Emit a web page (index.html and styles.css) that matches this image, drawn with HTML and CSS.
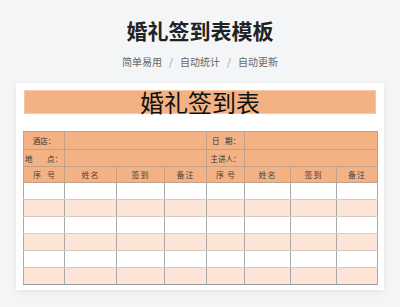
FILE: index.html
```html
<!DOCTYPE html>
<html lang="zh">
<head>
<meta charset="utf-8">
<link rel="stylesheet" href="styles.css">
</head>
<body>
<header class="head">
  <h1 class="title">婚礼签到表模板</h1>
  <div class="tags"><span>简单易用</span><span class="sep">/</span><span>自动统计</span><span class="sep">/</span><span>自动更新</span></div>
</header>
<main class="card">
  <div class="band">婚礼签到表</div>
  <table class="sheet">
    <colgroup>
      <col class="c1"><col class="c2"><col class="c3"><col class="c4">
      <col class="c5"><col class="c6"><col class="c7"><col class="c8">
    </colgroup>
    <tr class="info r1">
      <td class="lbl"><span class="ctr">酒店：</span></td>
      <td colspan="3"></td>
      <td class="lbl"><span class="spread"><span>日</span><span>期：</span></span></td>
      <td colspan="3"></td>
    </tr>
    <tr class="info r2">
      <td class="lbl"><span class="spread wide"><span>地</span><span>点：</span></span></td>
      <td colspan="3"></td>
      <td class="lbl"><span class="ctr">主讲人：</span></td>
      <td colspan="3"></td>
    </tr>
    <tr class="info hdr">
      <td><span class="spread seq"><span>序</span><span>号</span></span></td>
      <td>姓名</td><td>签到</td><td>备注</td>
      <td><span class="spread seq"><span>序</span><span>号</span></span></td>
      <td>姓名</td><td>签到</td><td>备注</td>
    </tr>
    <tr class="row"><td></td><td></td><td></td><td></td><td></td><td></td><td></td><td></td></tr>
    <tr class="row alt"><td></td><td></td><td></td><td></td><td></td><td></td><td></td><td></td></tr>
    <tr class="row"><td></td><td></td><td></td><td></td><td></td><td></td><td></td><td></td></tr>
    <tr class="row alt"><td></td><td></td><td></td><td></td><td></td><td></td><td></td><td></td></tr>
    <tr class="row"><td></td><td></td><td></td><td></td><td></td><td></td><td></td><td></td></tr>
    <tr class="row alt last"><td></td><td></td><td></td><td></td><td></td><td></td><td></td><td></td></tr>
  </table>
</main>
</body>
</html>
```
FILE: styles.css
```css
* { box-sizing: border-box; margin: 0; padding: 0; }
html, body { width: 400px; height: 307px; overflow: hidden; }
body {
  background: #f4f5f7;
  font-family: "Noto Sans CJK SC", "Noto Sans", sans-serif;
  display: flex;
  flex-direction: column;
  align-items: center;
}
.head {
  display: flex;
  flex-direction: column;
  align-items: center;
  padding-top: 17px;
}
.title {
  font-size: 21px;
  line-height: 26px;
  font-weight: 700;
  color: #222;
}
.tags {
  margin-top: 12px;
  font-size: 10px;
  line-height: 14px;
  color: #666;
  display: flex;
}
.sep { margin: 0 7px; color: #999; }
.card {
  margin-top: 14px;
  width: 368px;
  height: 207px;
  background: #fff;
  box-shadow: 0 2px 6px rgba(0,0,0,0.07);
  padding: 7px 7px 6px 7px;
  display: flex;
  flex-direction: column;
}
.band {
  margin: 0 1px;
  height: 24px;
  background: #f4b183;
  border: 1px solid #f8c9a6;
  text-align: center;
  font-size: 24px;
  line-height: 22px;
  color: #111;
  font-weight: 400;
}
.sheet {
  margin-top: 17px;
  width: 354px;
  border-collapse: collapse;
  table-layout: fixed;
  border: 1px solid #9a9a9a;
}
.c1 { width: 41px; } .c2 { width: 52px; } .c3 { width: 48px; } .c4 { width: 42px; }
.c5 { width: 38px; } .c6 { width: 46px; } .c7 { width: 46px; } .c8 { width: 41px; }
td {
  padding: 0;
  border: 1px solid #b9aaa0;
  font-size: 7.5px;
  color: #333;
  text-align: center;
  vertical-align: middle;
}
.info td { background: #f4b183; border-color: #c3a08a; }
.r1 { height: 18px; }
.r2 { height: 17px; }
.hdr { height: 16px; }
.hdr td { font-size: 8px; letter-spacing: 1px; color: #444; }
.lbl { text-align: left; }
.ctr { display: block; text-align: center; }
.spread { display: flex; justify-content: space-between; padding: 0 4px 0 5px; }
.spread.wide { padding: 0 2px 0 1px; }
.spread.seq { padding: 0 8px 0 9px; }
.row { height: 17px; }
.row td { background: #fff; border-color: #a9a9a9; border-top-color: #d9cac2; border-bottom-color: #d9cac2; }
.row.alt td { background: #fce4d6; }
.row.last td { border-bottom-color: #9a9a9a; }
```
